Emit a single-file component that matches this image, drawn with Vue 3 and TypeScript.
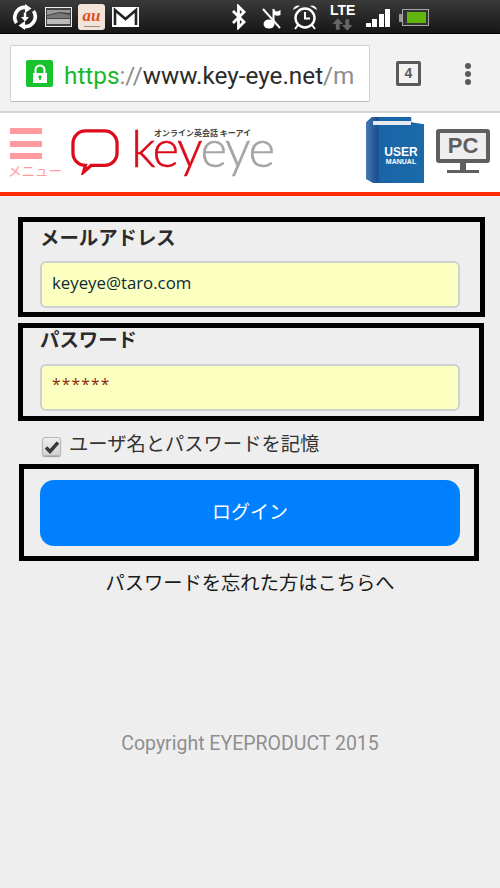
<script setup lang="ts">
import { ref } from "vue";

const email = ref("keyeye@taro.com");
const remember = ref(true);
const signalBars = [4, 8, 13, 18];
</script>

<template>
  <div class="page">
    <div class="status-bar">
      <div class="status-left">
        <svg class="ico-sync" width="26" height="26" viewBox="0 0 26 26">
          <path d="M4.500 19A10 10 0 0 1 14 3.500" fill="none" stroke="#fff" stroke-width="3.600" />
          <path d="M13 0l6.500 4.500-6.500 4.500z" fill="#fff" />
          <path d="M21.500 7A10 10 0 0 1 12 22.500" fill="none" stroke="#fff" stroke-width="3.600" />
          <path d="M13 26l-6.500-4.500 6.500-4.500z" fill="#fff" />
          <path d="M11.800 8.500h2.400v4.500h2.800l-4 4.500-4-4.500h2.800z" fill="#fff" />
        </svg>
        <svg class="ico-news" width="27" height="20" viewBox="0 0 27 20">
          <rect x="0.500" y="0.500" width="26" height="19" fill="#444" stroke="#eee" />
          <path d="M2 3h23v3L14 5 2 8z" fill="#999" />
          <path d="M2 9l12-3 11 2v3H2z" fill="#777" />
          <path d="M2 12h23v5H2z" fill="#bbb" />
        </svg>
        <div class="au-tile"><span class="au-text">au</span><i class="au-sub"></i></div>
        <svg class="ico-mail" width="27" height="20" viewBox="0 0 27 20">
          <rect width="27" height="20" fill="#fff" />
          <path d="M3 18V3l10.500 9L24 3v15" fill="none" stroke="#222" stroke-width="2.600" />
        </svg>
      </div>
      <div class="status-right">
        <svg width="18" height="26" viewBox="0 0 18 26">
          <path d="M3 7l11 11-5.500 5.500V2.500L14 8 3 19" fill="none" stroke="#fff" stroke-width="2.800" />
        </svg>
        <svg class="ico-note" width="20" height="24" viewBox="0 0 20 24">
          <ellipse cx="7" cy="19" rx="5.500" ry="4.500" fill="#fff" />
          <path d="M10.500 18V4h2c0 3 3 3 6 1v5c-2 1-4 1-6 0v8z" fill="#fff" />
          <path d="M1 4l17 19" stroke="#fff" stroke-width="2" />
        </svg>
        <svg class="ico-alarm" width="26" height="27" viewBox="0 0 26 27">
          <circle cx="13" cy="15" r="9.500" fill="none" stroke="#fff" stroke-width="2.400" />
          <path d="M13 9v6.500h5" fill="none" stroke="#fff" stroke-width="2" />
          <path d="M1 7a5 5 0 0 1 7-4zM25 7a5 5 0 0 0-7-4z" fill="#fff" />
          <path d="M6 22l-3 4M20 22l3 4" stroke="#fff" stroke-width="2" />
        </svg>
        <div class="lte">
          <span class="lte-text">LTE</span>
          <svg width="21" height="13" viewBox="0 0 22 13">
            <path d="M6 0l5.500 6H8v6H4V6H.5zM16 13l5.500-6H18V1h-4v6h-3.500z" fill="#666" />
          </svg>
        </div>
        <div class="signal">
          <i v-for="h in signalBars" :key="h" :style="{ height: h + 'px' }"></i>
        </div>
        <div class="battery">
          <span class="battery-tip"></span>
          <span class="battery-body"><span class="battery-fill"></span></span>
        </div>
      </div>
    </div>

    <div class="browser-bar">
      <div class="url-box">
        <span class="lock">
          <svg width="18" height="20" viewBox="0 0 18 20">
            <path d="M4.500 9V6a4.500 4.500 0 0 1 9 0v3" fill="none" stroke="#fff" stroke-width="2" />
            <path d="M2 9h14v10H2z" fill="#fff" />
            <circle cx="9" cy="13" r="1.700" fill="#19c32d" />
            <path d="M8.200 13h1.600v3H8.200z" fill="#19c32d" />
          </svg>
        </span>
        <span class="url"><span class="url-green">https</span><span class="url-gray">://</span><span class="url-dark">www.key-eye.net</span><span class="url-gray">/m</span></span>
      </div>
      <div class="tab-count">4</div>
      <div class="dots"><i></i><i></i><i></i></div>
    </div>

    <header class="site-header">
      <div class="menu">
        <div class="burger"><i></i><i></i><i></i></div>
        <span class="menu-label">メニュー</span>
      </div>
      <div class="logo">
        <svg class="bubble" width="48" height="46" viewBox="0 0 50 48">
          <path d="M15 2h20a13 13 0 0 1 13 13v10a13 13 0 0 1-13 13H21l-8 7 2-7a13 13 0 0 1-13-13V15A13 13 0 0 1 15 2z" fill="none" stroke="#dd0a1a" stroke-width="3.400" />
        </svg>
        <div class="logo-words">
          <span class="logo-tag">オンライン英会話 キーアイ</span>
          <span class="logo-name"><span class="logo-key">key</span><span class="logo-eye">eye</span></span>
        </div>
      </div>
      <div class="header-right">
        <div class="book">
          <span class="book-pages"></span>
          <span class="book-user">USER</span>
          <span class="book-manual">MANUAL</span>
        </div>
        <div class="pc">
          <div class="pc-screen">PC</div>
          <div class="pc-neck"></div>
          <div class="pc-foot"></div>
        </div>
      </div>
    </header>

    <main class="content">
      <section class="frame frame-email">
        <label class="field-label">メールアドレス</label>
        <input v-model="email" class="text-input" type="text" />
      </section>
      <section class="frame frame-password">
        <label class="field-label">パスワード</label>
        <div class="text-input password">******</div>
      </section>
      <label class="remember">
        <span class="check" :class="{ on: remember }" @click.prevent="remember = !remember">
          <svg v-if="remember" width="16" height="14" viewBox="0 0 16 14">
            <path d="M2 7.500l4 4L14 2.500" fill="none" stroke="#3a3a3a" stroke-width="3.400" />
          </svg>
        </span>
        <span class="remember-text">ユーザ名とパスワードを記憶</span>
      </label>
      <section class="frame frame-login">
        <button class="login-button" type="button">ログイン</button>
      </section>
      <a class="forgot">パスワードを忘れた方はこちらへ</a>
      <footer class="copyright">Copyright EYEPRODUCT 2015</footer>
    </main>
  </div>
</template>

<style>
html,
body {
  margin: 0;
  background: #eeeeee;
}
</style>

<style scoped>
.page {
  width: 500px;
  height: 888px;
  overflow: hidden;
  background: #eeeeee;
  font-family: "Noto Sans CJK JP", "Liberation Sans", sans-serif;
}
.status-bar {
  height: 34px;
  box-sizing: border-box;
  display: flex;
  justify-content: space-between;
  align-items: center;
  background: linear-gradient(to bottom, #3a3a3a, #161616);
  border-bottom: 1px solid #000;
}
.status-left,
.status-right {
  display: flex;
  align-items: center;
}
.status-left {
  padding-left: 12px;
}
.ico-news {
  margin-left: 7px;
}
.au-tile {
  width: 27px;
  height: 26px;
  margin-left: 6px;
  border-radius: 3px;
  background: #f3e4da;
  display: flex;
  flex-direction: column;
  align-items: center;
}
.au-text {
  height: 19px;
  margin-top: 3px;
  font: italic bold 17px/17px "Liberation Serif", serif;
  color: #e0501c;
}
.au-sub {
  width: 16px;
  height: 1px;
  background: #a08a7c;
}
.ico-mail {
  margin-left: 7px;
}
.status-right {
  padding-right: 71px;
}
.ico-note {
  margin-left: 14px;
}
.ico-alarm {
  margin-left: 10px;
}
.lte {
  width: 25px;
  margin-left: 12px;
  display: flex;
  flex-direction: column;
  align-items: center;
}
.lte-text {
  font: bold 14px/15px "Liberation Sans", sans-serif;
  color: #fff;
}
.signal {
  margin: 3px 0 0 11px;
  display: flex;
  align-items: flex-end;
  gap: 1.300px;
  height: 18px;
}
.signal i {
  width: 5px;
  background: #fff;
}
.battery {
  margin: 2px 0 0 9px;
  display: flex;
  align-items: center;
}
.battery-tip {
  width: 3px;
  height: 8px;
  background: #999;
}
.battery-body {
  width: 27px;
  height: 17px;
  box-sizing: border-box;
  padding: 2px;
  border: 1px solid #a5a5a5;
  background: #333;
  display: block;
}
.battery-fill {
  display: block;
  margin-left: 2px;
  height: 100%;
  background: #62b50a;
}
.browser-bar {
  height: 79px;
  box-sizing: border-box;
  padding: 11px 0 0 10px;
  display: flex;
  align-items: flex-start;
  background: #f2f2f2;
  border-bottom: 2px solid #d6d6d6;
}
.url-box {
  width: 360px;
  height: 57px;
  box-sizing: border-box;
  padding-left: 15px;
  display: flex;
  align-items: center;
  gap: 11px;
  background: #fff;
  border: 1px solid #d0d0d0;
  border-bottom-color: #bbb;
  border-radius: 2px;
  overflow: hidden;
}
.lock {
  flex: none;
  width: 27px;
  height: 27px;
  display: flex;
  align-items: center;
  justify-content: center;
  background: #19c32d;
  border-radius: 2px;
}
.url {
  margin-top: 3px;
  font: 24.300px "Roboto", sans-serif;
  white-space: nowrap;
}
.url-green {
  color: #19b82c;
}
.url-gray {
  color: #8d8d8d;
}
.url-dark {
  color: #2b2b2b;
}
.tab-count {
  width: 25px;
  height: 25px;
  box-sizing: border-box;
  margin: 16px 0 0 26px;
  border: 3px solid #5a5a5a;
  border-radius: 2px;
  font: bold 14px/19px "Liberation Sans", sans-serif;
  text-align: center;
  color: #5a5a5a;
}
.dots {
  margin: 18px 0 0 44px;
  display: flex;
  flex-direction: column;
  gap: 2px;
}
.dots i {
  width: 6px;
  height: 6px;
  border-radius: 50%;
  background: #5a5a5a;
}
.site-header {
  height: 83px;
  box-sizing: border-box;
  padding-left: 8px;
  display: flex;
  background: #fff;
  border-bottom: 4px solid #ff2a00;
}
.menu {
  width: 54px;
  padding-top: 15px;
  display: flex;
  flex-direction: column;
}
.burger {
  width: 32px;
  margin-left: 2px;
  display: flex;
  flex-direction: column;
  gap: 6.500px;
}
.burger i {
  height: 6px;
  background: #ff9a9e;
}
.menu-label {
  margin-top: 4px;
  font-size: 13.500px;
  line-height: 14px;
  color: #ff9a9e;
  white-space: nowrap;
}
.logo {
  margin-left: 9px;
  display: flex;
  align-items: flex-start;
}
.bubble {
  margin-top: 16px;
}
.logo-words {
  margin-left: 12px;
  display: flex;
  flex-direction: column;
  align-items: center;
  width: 143px;
}
.logo-tag {
  margin-top: 15px;
  font-size: 8px;
  font-weight: 700;
  line-height: 10px;
  color: #444;
  white-space: nowrap;
}
.logo-name {
  margin-top: 1px;
  font: 300 51px/17px "Lato", sans-serif;
  -webkit-text-stroke: 0.5px currentColor;
  letter-spacing: -1.500px;
  white-space: nowrap;
}
.logo-key {
  color: #dd0a1a;
}
.logo-eye {
  color: #a5a5a8;
}
.header-right {
  margin-left: auto;
  display: flex;
  align-items: flex-start;
  padding: 4px 10px 0 0;
}
.book {
  position: relative;
  width: 58px;
  height: 66px;
  box-sizing: border-box;
  padding-top: 29px;
  display: flex;
  flex-direction: column;
  align-items: flex-end;
  background: linear-gradient(to right, #4a78b4 0, #2a5f9e 12%, #1b4f8c 20%, #1a64a8 24%, #1a6aa9 100%);
  clip-path: polygon(0 8%, 10% 0, 78% 0, 78% 8%, 100% 11%, 100% 100%, 12% 100%, 0 94%);
  color: #fff;
  font-family: "Liberation Sans", sans-serif;
  font-weight: bold;
}
.book-pages {
  position: absolute;
  left: 7px;
  top: 4px;
  width: 38px;
  height: 4px;
  background: #e6eaf0;
}
.book-user {
  width: 46px;
  font-size: 12px;
  line-height: 12px;
  text-align: center;
}
.book-manual {
  width: 46px;
  font-size: 7px;
  line-height: 8px;
  text-align: center;
}
.pc {
  width: 54px;
  margin: 12px 0 0 12px;
  display: flex;
  flex-direction: column;
  align-items: center;
}
.pc-screen {
  width: 54px;
  height: 34px;
  box-sizing: border-box;
  border: 4px solid #5f5f5f;
  border-radius: 3px;
  background: #efeded;
  font: bold 22px/26px "Liberation Sans", sans-serif;
  color: #5f5f5f;
  text-align: center;
}
.pc-neck {
  width: 6px;
  height: 7px;
  background: #5f5f5f;
}
.pc-foot {
  width: 32px;
  height: 3px;
  background: #5f5f5f;
}
.content {
  padding-top: 21px;
  display: flex;
  flex-direction: column;
}
.frame {
  box-sizing: border-box;
  border: 5px solid #000;
  margin-left: 18px;
  padding: 0 20px 0 17px;
}
.frame-email {
  width: 467px;
  height: 100px;
}
.frame-password {
  width: 466px;
  height: 98px;
  margin-top: 6px;
}
.frame-login {
  width: 460px;
  height: 97px;
  margin-left: 19px;
  padding: 11px 0 0 16px;
}
.field-label {
  display: block;
  height: 39px;
  font-size: 19.400px;
  font-weight: 700;
  line-height: 30px;
  color: #2b2b2b;
}
.frame-password .field-label {
  height: 36px;
  line-height: 22px;
}
.text-input {
  display: block;
  width: 420px;
  height: 47px;
  box-sizing: border-box;
  padding: 0 10px 4px;
  border: 2px solid #cfcfcf;
  border-radius: 6px;
  background: #fbffc0;
  outline: none;
  font-family: "Open Sans", "Liberation Sans", sans-serif;
  font-size: 16.800px;
  color: #0a2a35;
}
.password {
  padding-bottom: 0;
  font-size: 15.500px;
  line-height: 36px;
  letter-spacing: 1.200px;
  color: #8a2a10;
}
.remember {
  height: 43px;
  padding-left: 42px;
  display: flex;
  align-items: center;
  gap: 8px;
  font-size: 19.300px;
  color: #333;
}
.remember-text {
  margin-top: 1px;
}
.check {
  width: 19px;
  height: 19px;
  margin-top: 8px;
  box-sizing: border-box;
  display: flex;
  align-items: center;
  justify-content: center;
  border: 1px solid #b5b5b5;
  border-radius: 3px;
  background: linear-gradient(to bottom, #eee, #d2d2d2);
  box-shadow: 0 1px 1px #999;
}
.login-button {
  display: block;
  width: 420px;
  height: 66px;
  padding: 0 0 6px;
  border: none;
  border-radius: 14px;
  background: #0080ff;
  font-family: inherit;
  font-size: 19px;
  color: #fff;
}
.forgot {
  margin-top: 8px;
  font-size: 19.300px;
  line-height: 27px;
  text-align: center;
  color: #1a1a1a;
}
.copyright {
  margin-top: 136px;
  font-family: "Roboto", sans-serif;
  font-size: 19.500px;
  line-height: 24px;
  text-align: center;
  color: #8f8f8f;
}
</style>
